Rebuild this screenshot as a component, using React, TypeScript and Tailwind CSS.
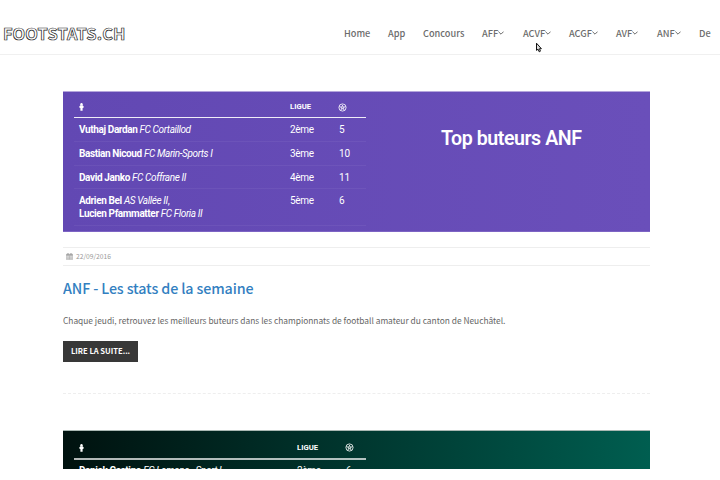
import type { ReactNode } from "react";

const sans = "font-['Noto_Sans_CJK_SC','Noto_Sans',sans-serif]";
const roboto = "font-[Roboto,'Liberation_Sans',sans-serif]";

const NAV = [
  { label: "Home", width: "w-[44px]", menu: false },
  { label: "App", width: "w-[35px]", menu: false },
  { label: "Concours", width: "w-[59px]", menu: false },
  { label: "AFF", width: "w-[41px]", menu: true },
  { label: "ACVF", width: "w-[46px]", menu: true },
  { label: "ACGF", width: "w-[47px]", menu: true },
  { label: "AVF", width: "w-[41px]", menu: true },
  { label: "ANF", width: "w-[42px]", menu: true },
  { label: "De", width: "w-[21px]", menu: false },
];

function Chevron() {
  return (
    <svg className="h-[4px] w-[6px] shrink-0" viewBox="0 0 6 4" fill="none" stroke="currentColor" strokeWidth="1">
      <path d="M0.4 0.6 3 3.2 5.6 0.6" />
    </svg>
  );
}

function Ball() {
  return (
    <svg className="size-[9px]" viewBox="0 0 18 18" fill="none" stroke="#fff" strokeWidth="1.6">
      <circle cx="9" cy="9" r="7.2" />
      <path d="M9 6.2 11.8 8.2 10.7 11.5H7.3L6.2 8.2Z" fill="#fff" fillOpacity="0.35" />
      <path d="M9 6.2V3.8M11.8 8.2 15.5 7.4M10.7 11.5 12.6 14.6M7.3 11.5 5.4 14.6M6.2 8.2 2.5 7.4" />
    </svg>
  );
}

function Player() {
  return (
    <svg className="h-[8px] w-[5px]" viewBox="0 0 10 16" fill="#fff">
      <circle cx="5" cy="2.5" r="2.4" />
      <path d="M2.6 4.4H7.4L9.9 8.2 8 10.2 7.2 9.8V15.5H2.8V9.8L2 10.2.1 8.2Z" />
    </svg>
  );
}

function TableHead({ className, nameWidth = "w-[216px]" }: { className: string; nameWidth?: string }) {
  return (
    <div className={`flex items-center ${className}`}>
      <div className={`pl-[5px] ${nameWidth}`}><Player /></div>
      <div className="w-[48px] text-[7.7px] font-bold leading-[10px]">LIGUE</div>
      <Ball />
    </div>
  );
}

type RowProps = { children: ReactNode; league: string; goals: string; className: string; nameWidth?: string };

function Row({ children, league, goals, className, nameWidth = "w-[216px]" }: RowProps) {
  return (
    <div className={`flex border-b border-white/5 text-[10px] leading-[13px] ${className}`}>
      <div className={`whitespace-nowrap pl-[5px] tracking-[-0.38px] ${nameWidth}`}>{children}</div>
      <div className="w-[49px] tracking-[-0.3px]">{league}</div>
      <div>{goals}</div>
    </div>
  );
}

export default function App() {
  return (
    <div className={`h-[480px] w-[720px] overflow-hidden bg-white ${sans}`}>
      <header className="relative flex h-[55px] items-center border-b border-[#f0f0f0] pt-[11px]">
        <div className="w-[341px] pl-[3px] text-[16.4px] font-bold leading-[20px] tracking-[0.15px] text-white [-webkit-text-stroke:0.7px_#222]">
          FOOTSTATS.CH
        </div>
        <nav className="flex pl-[3px] text-[9.2px] font-medium leading-[14px] text-[#6c6c6c]">
          {NAV.map((item) => (
            <a key={item.label} className={`flex items-center whitespace-nowrap ${item.width}`}>
              {item.label}
              {item.menu && <Chevron />}
            </a>
          ))}
        </nav>
        <svg className="absolute left-[535px] top-[42px] h-[11px] w-[8px]" viewBox="0 0 8 11">
          <path d="M1.5 1.2V8.4L3.1 7.2 4.2 9.8 5.4 9.2 4.5 6.7H6.4Z" fill="#ddd" stroke="#111" strokeWidth="1" />
        </svg>
      </header>

      <main className="ml-[63px] flex h-[414px] w-[587px] flex-col overflow-hidden pt-[36px]">
        <section className={`flex h-[141px] shrink-0 border-y border-t-[#b5a6dc] border-b-[#7d64c4] bg-linear-to-r from-[#6248b3] to-[#6a4fba] text-white ${roboto}`}>
          <div className="ml-[11px] w-[292px]">
            <TableHead className="h-[26px] border-b border-white/90 pt-[5px]" />
            <Row league="2ème" goals="5" className="h-[24px] pt-[5px]">
              <b>Vuthaj Dardan</b> <i>FC Cortaillod</i>
            </Row>
            <Row league="3ème" goals="10" className="h-[24px] pt-[5px]">
              <b>Bastian Nicoud</b> <i>FC Marin-Sports I</i>
            </Row>
            <Row league="4ème" goals="11" className="h-[23px] pt-[5px]">
              <b>David Janko</b> <i>FC Coffrane II</i>
            </Row>
            <Row league="5ème" goals="6" className="h-[37px] pt-[5px]">
              <b>Adrien Bel</b> <i>AS Vallée II</i>,<br />
              <b>Lucien Pfammatter</b> <i>FC Floria II</i>
            </Row>
          </div>
          <h1 className="ml-[75px] mt-[35px] whitespace-nowrap text-[19.6px] font-semibold leading-[24px] tracking-[-0.45px]">Top buteurs ANF</h1>
        </section>

        <div className="mt-[15px] flex h-[19px] shrink-0 items-center border-y border-[#eee] pl-[3px] text-[6.7px] text-[#999]">
          <svg className="mr-[3px] size-[7px]" viewBox="0 0 14 14" fill="none" stroke="#999">
            <path d="M.7 2.5H13.3V13.3H.7Z" />
            <path d="M.7 4H13.3" strokeWidth="2.6" />
            <path d="M4 0V4M10 0V4" strokeWidth="2" />
            <path d="M4 5V13M7 5V13M10 5V13M1 8H13M1 10.6H13" />
          </svg>
          22/09/2016
        </div>
        <h2 className="mt-[12px] shrink-0 whitespace-nowrap text-[14.3px] font-medium leading-[20px] tracking-[-0.13px] text-[#337fc1]">
          ANF - Les stats de la semaine
        </h2>
        <p className="mt-[15px] shrink-0 whitespace-nowrap text-[8.37px] leading-[14px] text-[#666]">
          Chaque jeudi, retrouvez les meilleurs buteurs dans les championnats de football amateur du canton de Neuchâtel.
        </p>
        <a className="mt-[14px] flex h-[21px] w-[75px] shrink-0 items-center justify-center whitespace-nowrap bg-[#383838] pb-px text-[7.6px] font-bold text-white">
          LIRE LA SUITE...
        </a>
        <div className="mt-[31px] shrink-0 border-t border-dashed border-[#eee]" />

        <section className={`mt-[36px] h-[141px] shrink-0 border-t border-[#a9b8b3] bg-linear-to-r from-[#00120f] via-[#00372f] to-[#005e50] text-white ${roboto}`}>
          <div className="ml-[11px] w-[292px]">
            <TableHead className="h-[29px] border-b-2 border-white/70 pt-[6px]" nameWidth="w-[223px]" />
            <Row league="2ème" goals="6" className="h-[24px] pt-[4px]" nameWidth="w-[223px]">
              <b>Danick Castino</b> <i>FC Lamone - Sport I</i>
            </Row>
          </div>
        </section>
      </main>
    </div>
  );
}
